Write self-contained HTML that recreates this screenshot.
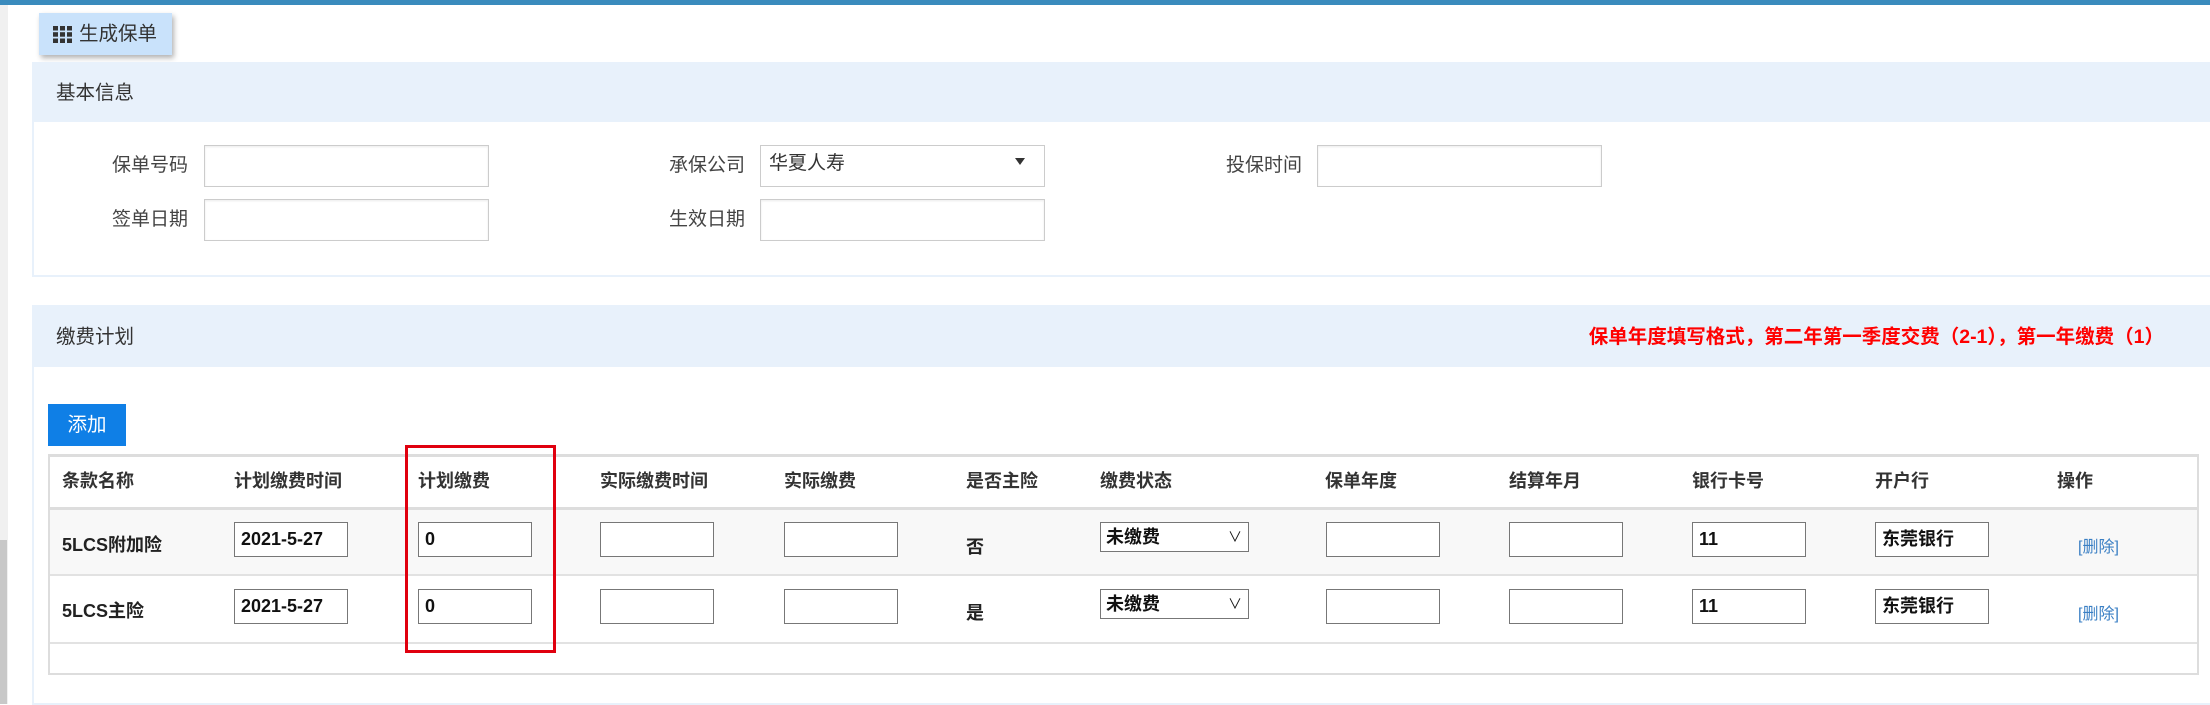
<!DOCTYPE html>
<html><head><meta charset="utf-8"><style>
*{box-sizing:border-box;margin:0;padding:0}
body{width:2210px;height:704px;position:relative;overflow:hidden;background:#fff;font-family:"Liberation Sans","Noto Sans CJK SC",sans-serif;color:#333}
.a{position:absolute}
.lbl{position:absolute;font-size:19px;color:#444;text-align:right;width:120px;line-height:42px}
.inp{position:absolute;border:1px solid #ccc;box-shadow:inset 0 1px 2px rgba(0,0,0,.08);background:#fff}
.th{position:absolute;top:454px;line-height:54px;font-size:18px;font-weight:bold;color:#333}
.td{position:absolute;font-size:18px;font-weight:bold;color:#222}
.ci{position:absolute;width:114px;height:35px;border:1px solid #777;background:#fff;font-size:18px;font-weight:bold;line-height:33px;padding-left:6px;color:#111}
.sel{position:absolute;left:1100px;width:149px;height:30px;border:1px solid #777;background:#fff;font-size:18px;font-weight:bold;line-height:28px;padding-left:5px;color:#111}
.sel span{position:absolute;right:6px;top:0;font-weight:normal;font-size:14px}
.del{position:absolute;left:2078px;font-size:16px;color:#3a7fc4}
</style></head><body>
<div class="a" style="left:0;top:0;width:2210px;height:5px;background:#3a8bbd"></div>
<div class="a" style="left:0;top:5px;width:8px;height:699px;background:#f0f0f0"></div>
<div class="a" style="left:0;top:540px;width:7px;height:164px;background:#c8c8c8"></div>

<div class="a" style="left:39px;top:13px;width:133px;height:42px;background:#c9e2fb;box-shadow:2px 3px 5px rgba(0,0,0,.3)"></div>
<svg class="a" style="left:53px;top:26px" width="19" height="17" viewBox="0 0 19 17"><g fill="#333"><rect x="0" y="0" width="5" height="4.5"/><rect x="7" y="0" width="5" height="4.5"/><rect x="14" y="0" width="5" height="4.5"/><rect x="0" y="6.2" width="5" height="4.5"/><rect x="7" y="6.2" width="5" height="4.5"/><rect x="14" y="6.2" width="5" height="4.5"/><rect x="0" y="12.5" width="5" height="4.5"/><rect x="7" y="12.5" width="5" height="4.5"/><rect x="14" y="12.5" width="5" height="4.5"/></g></svg>
<div class="a" style="left:79px;top:22px;font-size:19.5px;color:#333;line-height:24px">生成保单</div>

<div class="a" style="left:32px;top:62px;width:2180px;height:215px;border:2px solid #e8f1fb;border-right:none;background:#fff"></div>
<div class="a" style="left:33px;top:64px;width:2177px;height:58px;background:#e8f1fb"></div>
<div class="a" style="left:56px;top:81px;font-size:19.5px;color:#333;line-height:24px">基本信息</div>

<div class="lbl" style="left:68px;top:145px">保单号码</div>
<div class="inp" style="left:204px;top:145px;width:285px;height:42px"></div>
<div class="lbl" style="left:68px;top:199px">签单日期</div>
<div class="inp" style="left:204px;top:199px;width:285px;height:42px"></div>

<div class="lbl" style="left:625px;top:145px">承保公司</div>
<div class="inp" style="left:760px;top:145px;width:285px;height:42px;box-shadow:none"><span style="position:absolute;left:8px;top:0;line-height:36px;font-size:19px;color:#333">华夏人寿</span><span style="position:absolute;left:254px;top:12px;width:0;height:0;border-left:5px solid transparent;border-right:5px solid transparent;border-top:7px solid #333"></span></div>
<div class="lbl" style="left:625px;top:199px">生效日期</div>
<div class="inp" style="left:760px;top:199px;width:285px;height:42px"></div>

<div class="lbl" style="left:1182px;top:145px">投保时间</div>
<div class="inp" style="left:1317px;top:145px;width:285px;height:42px"></div>

<div class="a" style="left:32px;top:305px;width:2180px;height:400px;border:2px solid #e8f1fb;border-right:none;background:#fff"></div>
<div class="a" style="left:33px;top:307px;width:2177px;height:60px;background:#e8f1fb"></div>
<div class="a" style="left:56px;top:325px;font-size:19.5px;color:#333;line-height:24px">缴费计划</div>
<div class="a" style="right:46px;top:324px;font-size:19.5px;font-weight:bold;color:#f00;line-height:26px;white-space:nowrap">保单年度填写格式，第二年第一季度交费（2-1），第一年缴费（1）</div>

<div class="a" style="left:48px;top:404px;width:78px;height:42px;background:#0f7fe6;color:#fff;font-size:19.5px;line-height:42px;text-align:center">添加</div>

<div class="a" style="left:48px;top:454px;width:2151px;height:221px;border:2px solid #ddd;border-top-width:3px"></div>
<div class="a" style="left:50px;top:507px;width:2147px;height:3px;background:#ddd"></div>
<div class="a" style="left:50px;top:510px;width:2147px;height:66px;background:#f8f8f8;border-bottom:2px solid #e2e2e2"></div>
<div class="a" style="left:50px;top:642px;width:2147px;height:2px;background:#e2e2e2"></div>

<div class="th" style="left:62px">条款名称</div>
<div class="th" style="left:234px">计划缴费时间</div>
<div class="th" style="left:418px">计划缴费</div>
<div class="th" style="left:600px">实际缴费时间</div>
<div class="th" style="left:784px">实际缴费</div>
<div class="th" style="left:966px">是否主险</div>
<div class="th" style="left:1100px">缴费状态</div>
<div class="th" style="left:1325px">保单年度</div>
<div class="th" style="left:1509px">结算年月</div>
<div class="th" style="left:1692px">银行卡号</div>
<div class="th" style="left:1875px">开户行</div>
<div class="th" style="left:2057px">操作</div>

<div class="td" style="left:62px;top:531px">5LCS附加险</div>
<div class="ci" style="left:234px;top:522px">2021-5-27</div>
<div class="ci" style="left:418px;top:522px">0</div>
<div class="ci" style="left:600px;top:522px"></div>
<div class="ci" style="left:784px;top:522px"></div>
<div class="td" style="left:966px;top:533px">否</div>
<div class="sel" style="top:522px">未缴费<span>∨</span></div>
<div class="ci" style="left:1326px;top:522px"></div>
<div class="ci" style="left:1509px;top:522px"></div>
<div class="ci" style="left:1692px;top:522px">11</div>
<div class="ci" style="left:1875px;top:522px">东莞银行</div>
<div class="del" style="top:533px">[删除]</div>

<div class="td" style="left:62px;top:597px">5LCS主险</div>
<div class="ci" style="left:234px;top:589px">2021-5-27</div>
<div class="ci" style="left:418px;top:589px">0</div>
<div class="ci" style="left:600px;top:589px"></div>
<div class="ci" style="left:784px;top:589px"></div>
<div class="td" style="left:966px;top:599px">是</div>
<div class="sel" style="top:589px">未缴费<span>∨</span></div>
<div class="ci" style="left:1326px;top:589px"></div>
<div class="ci" style="left:1509px;top:589px"></div>
<div class="ci" style="left:1692px;top:589px">11</div>
<div class="ci" style="left:1875px;top:589px">东莞银行</div>
<div class="del" style="top:600px">[删除]</div>

<div class="a" style="left:405px;top:445px;width:151px;height:208px;border:3px solid #e0000f"></div>
</body></html>
